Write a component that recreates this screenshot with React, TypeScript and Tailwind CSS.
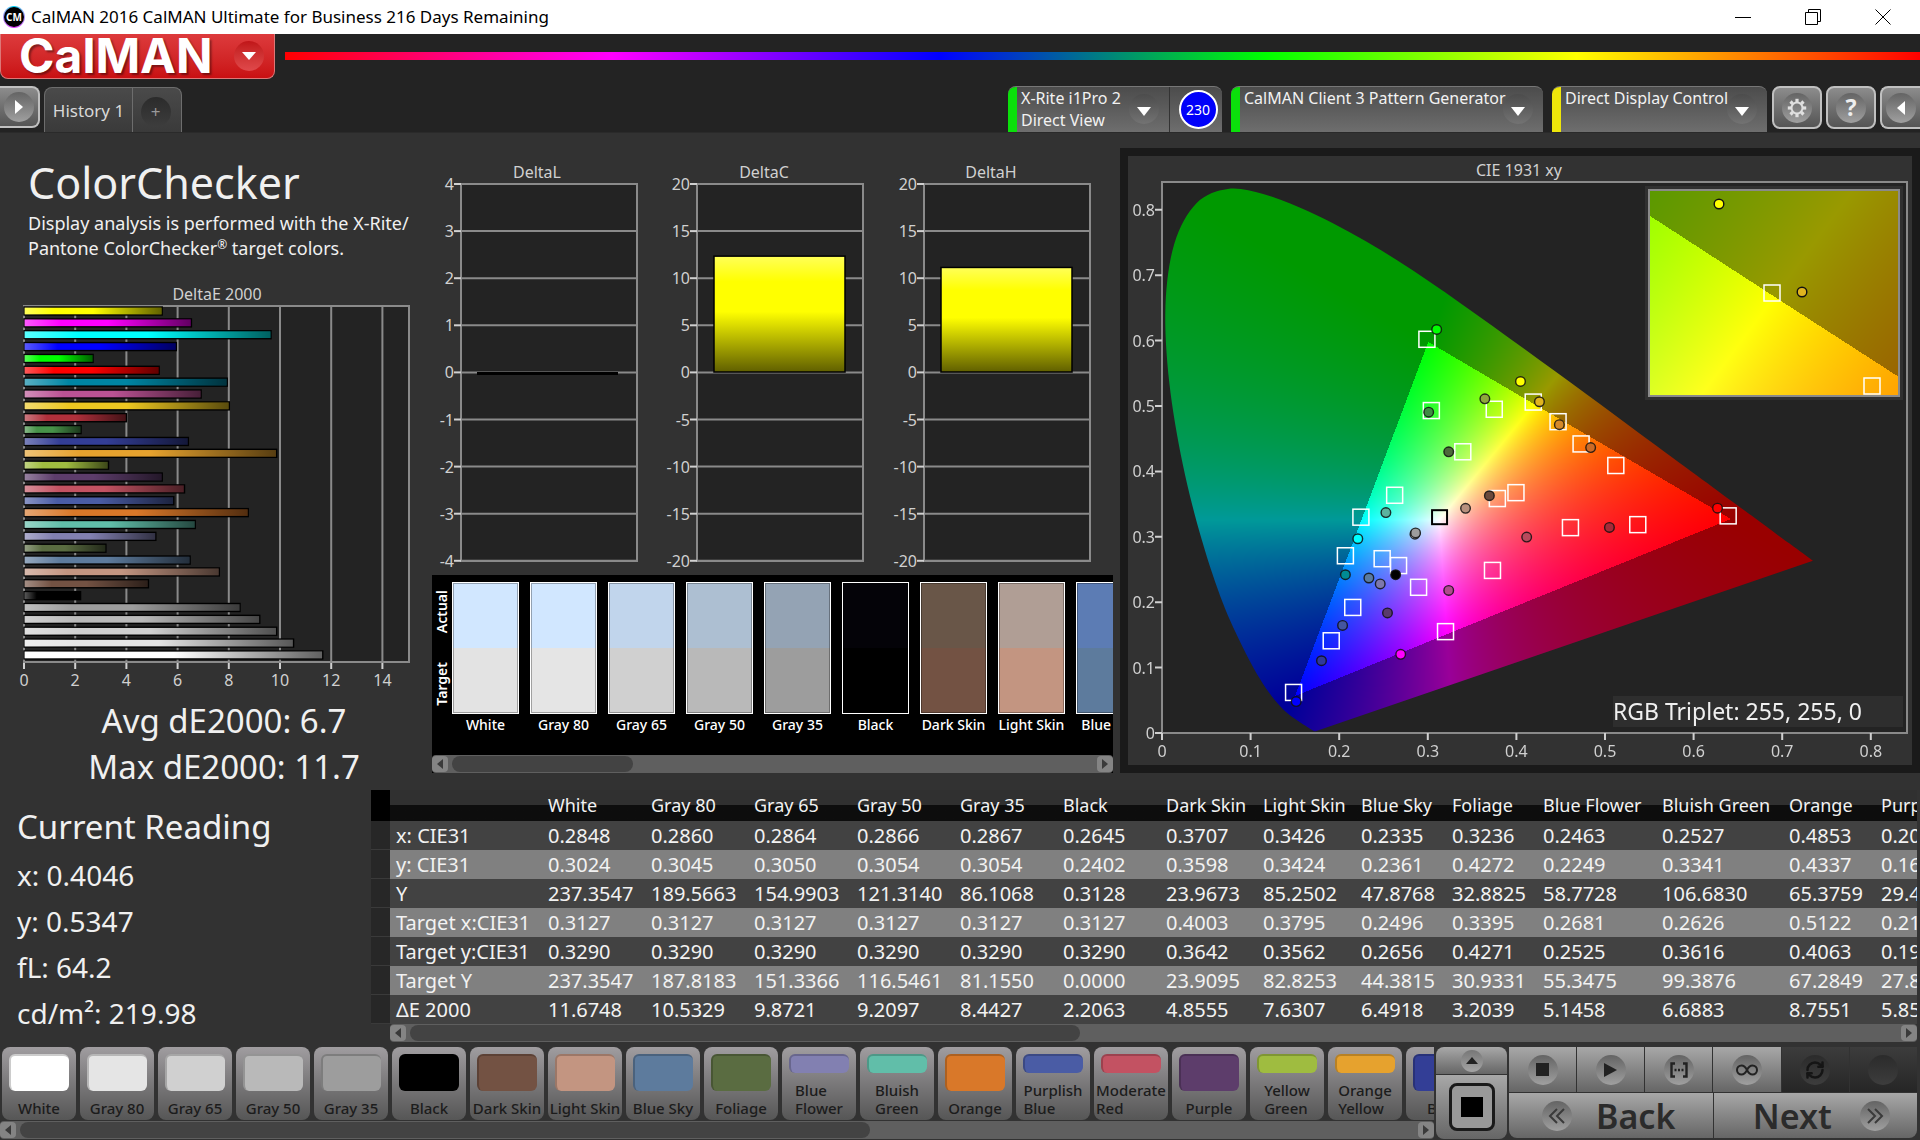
import { useEffect, useRef } from "react";
import type { ReactNode } from "react";
import { RefreshCw } from "lucide-react";

interface Patch {
  name: string;
  color: string;
  dE: number;
  actual?: string;
  lines?: string[];
}

const PATCHES: Patch[] = [
  { name: "White", color: "#ffffff", dE: 11.67, actual: "#d1e7ff" },
  { name: "Gray 80", color: "#e5e5e5", dE: 10.53, actual: "#d1e7ff" },
  { name: "Gray 65", color: "#d0d0d0", dE: 9.87, actual: "#c1d5ec" },
  { name: "Gray 50", color: "#b9b9b9", dE: 9.21, actual: "#adbfd2" },
  { name: "Gray 35", color: "#9d9d9d", dE: 8.44, actual: "#94a3b4" },
  { name: "Black", color: "#000000", dE: 2.21, actual: "#040308" },
  { name: "Dark Skin", color: "#735243", dE: 4.86, actual: "#695648" },
  { name: "Light Skin", color: "#c39581", dE: 7.63, actual: "#b09e95" },
  { name: "Blue Sky", color: "#5d7b9d", dE: 6.49, actual: "#5c7cb4" },
  { name: "Foliage", color: "#5a6c41", dE: 3.2 },
  { name: "Blue Flower", color: "#8280b1", dE: 5.15, lines: ["Blue", "Flower"] },
  { name: "Bluish Green", color: "#61bea9", dE: 6.69, lines: ["Bluish", "Green"] },
  { name: "Orange", color: "#d97829", dE: 8.76 },
  { name: "Purplish Blue", color: "#4a5ca5", dE: 5.85, lines: ["Purplish", "Blue"] },
  { name: "Moderate Red", color: "#c35262", dE: 6.27, lines: ["Moderate", "Red"] },
  { name: "Purple", color: "#5d3d6b", dE: 5.4 },
  { name: "Yellow Green", color: "#9fbc40", dE: 3.3, lines: ["Yellow", "Green"] },
  { name: "Orange Yellow", color: "#e6a22e", dE: 9.87, lines: ["Orange", "Yellow"] },
  { name: "Blue", color: "#333e96", dE: 6.42 },
  { name: "Green", color: "#479349", dE: 2.23 },
  { name: "Red", color: "#b0303b", dE: 4 },
  { name: "Yellow", color: "#edc721", dE: 8.02 },
  { name: "Magenta", color: "#bb5294", dE: 6.92 },
  { name: "Cyan", color: "#0085a3", dE: 7.94 },
  { name: "100% Red", color: "#ff0000", dE: 5.28 },
  { name: "100% Green", color: "#00ff00", dE: 2.7 },
  { name: "100% Blue", color: "#0000ff", dE: 5.95 },
  { name: "100% Cyan", color: "#00ffff", dE: 9.65 },
  { name: "100% Magenta", color: "#ff00ff", dE: 6.54 },
  { name: "100% Yellow", color: "#ffff00", dE: 5.4 },
];

const COLUMNS = [
  { name: "White", width: "w-[103px]" },
  { name: "Gray 80", width: "w-[103px]" },
  { name: "Gray 65", width: "w-[103px]" },
  { name: "Gray 50", width: "w-[103px]" },
  { name: "Gray 35", width: "w-[103px]" },
  { name: "Black", width: "w-[103px]" },
  { name: "Dark Skin", width: "w-[97px]" },
  { name: "Light Skin", width: "w-[98px]" },
  { name: "Blue Sky", width: "w-[91px]" },
  { name: "Foliage", width: "w-[91px]" },
  { name: "Blue Flower", width: "w-[119px]" },
  { name: "Bluish Green", width: "w-[127px]" },
  { name: "Orange", width: "w-[92px]" },
  { name: "Purplish Blue", width: "w-[130px]" },
];

const ROWS = [
  { label: "x: CIE31", values: "0.2848 0.2860 0.2864 0.2866 0.2867 0.2645 0.3707 0.3426 0.2335 0.3236 0.2463 0.2527 0.4853 0.2038" },
  { label: "y: CIE31", values: "0.3024 0.3045 0.3050 0.3054 0.3054 0.2402 0.3598 0.3424 0.2361 0.4272 0.2249 0.3341 0.4337 0.1645" },
  { label: "Y", values: "237.3547 189.5663 154.9903 121.3140 86.1068 0.3128 23.9673 85.2502 47.8768 32.8825 58.7728 106.6830 65.3759 29.4120" },
  { label: "Target x:CIE31", values: "0.3127 0.3127 0.3127 0.3127 0.3127 0.3127 0.4003 0.3795 0.2496 0.3395 0.2681 0.2626 0.5122 0.2153" },
  { label: "Target y:CIE31", values: "0.3290 0.3290 0.3290 0.3290 0.3290 0.3290 0.3642 0.3562 0.2656 0.4271 0.2525 0.3616 0.4063 0.1920" },
  { label: "Target Y", values: "237.3547 187.8183 151.3366 116.5461 81.1550 0.0000 23.9095 82.8253 44.3815 30.9331 55.3475 99.3876 67.2849 27.8410" },
  { label: "ΔE 2000", values: "11.6748 10.5329 9.8721 9.2097 8.4427 2.2063 4.8555 7.6307 6.4918 3.2039 5.1458 6.6883 8.7551 5.8530" },
];

// CIE 1931 2 degree spectral locus, 400nm to 700nm
const LOCUS = [
  [0.1733, 0.0048], [0.1726, 0.0048], [0.1714, 0.0051], [0.1689, 0.0069], [0.1644, 0.0109],
  [0.1566, 0.0177], [0.144, 0.0297], [0.1355, 0.0399], [0.1241, 0.0578], [0.1096, 0.0868],
  [0.0913, 0.1327], [0.0687, 0.2007], [0.0454, 0.295], [0.0235, 0.4127], [0.0082, 0.5384],
  [0.0039, 0.6548], [0.0139, 0.7502], [0.0389, 0.812], [0.0743, 0.8338], [0.1142, 0.8262],
  [0.1547, 0.8059], [0.1929, 0.7816], [0.2296, 0.7543], [0.2658, 0.7243], [0.3016, 0.6923],
  [0.3373, 0.6589], [0.3731, 0.6245], [0.4087, 0.5896], [0.4441, 0.5547], [0.4788, 0.5202],
  [0.5125, 0.4866], [0.5448, 0.4544], [0.5752, 0.4242], [0.6029, 0.3965], [0.627, 0.3725],
  [0.6482, 0.3514], [0.6658, 0.334], [0.6915, 0.3083], [0.7079, 0.292], [0.719, 0.2809],
  [0.7347, 0.2653],
];

const TARGETS = [
  [0.299, 0.602], [0.304, 0.493], [0.375, 0.495], [0.419, 0.506], [0.447, 0.476],
  [0.473, 0.442], [0.5122, 0.409], [0.3395, 0.43], [0.2626, 0.3635], [0.2245, 0.33],
  [0.3785, 0.3585], [0.3995, 0.3675], [0.461, 0.314], [0.537, 0.3186], [0.639, 0.332],
  [0.207, 0.271], [0.2485, 0.2665], [0.267, 0.256], [0.2896, 0.2228], [0.373, 0.2486],
  [0.2153, 0.192], [0.191, 0.141], [0.32, 0.155], [0.1485, 0.062],
];

const MEASURED: [number, number, string][] = [
  [0.31, 0.617, "#00ff00"], [0.4046, 0.5375, "#ffff00"], [0.3644, 0.511, "#8ea83c"],
  [0.426, 0.5065, "#e0b41f"], [0.4485, 0.4715, "#d5892a"], [0.4838, 0.4365, "#cc6a26"],
  [0.3236, 0.43, "#4c6a3a"], [0.301, 0.4905, "#3f8c43"], [0.3695, 0.3628, "#6b4a3c"],
  [0.3426, 0.3435, "#b8917e"], [0.2527, 0.337, "#5bb39f"], [0.2855, 0.304, "#dddddd"],
  [0.2862, 0.306, "#9d9d9d"], [0.221, 0.297, "#00ffff"], [0.207, 0.242, "#008a94"],
  [0.2335, 0.237, "#5a7ba0"], [0.2463, 0.228, "#7d78ad"], [0.2637, 0.242, "#000000"],
  [0.4116, 0.2996, "#b84a5c"], [0.505, 0.3143, "#a62a38"], [0.627, 0.3438, "#ff0000"],
  [0.3236, 0.218, "#b04a8e"], [0.2545, 0.1836, "#5a3a6c"], [0.2038, 0.1645, "#44559f"],
  [0.18, 0.1105, "#30389a"], [0.2694, 0.1203, "#ff00ff"], [0.1514, 0.048, "#0000ff"],
];

// Brightest RGB mix for a chromaticity, dimmed outside the gamut
function chromaToRgb(x: number, y: number) {
  const X = x / y;
  const Z = (1 - x - y) / y;
  const lin = [
    3.2406 * X - 1.5372 - 0.4986 * Z,
    -0.9689 * X + 1.8758 + 0.0415 * Z,
    0.0557 * X - 0.204 + 1.057 * Z,
  ];
  const max = Math.max(...lin);
  const inside = Math.min(...lin) >= -0.001 * max;
  return lin.map((v) => (Math.max(0, v) / max) * (inside ? 255 : 153));
}

interface GamutProps {
  width: number;
  height: number;
  x0: number;
  y0: number;
  kx: number;
  ky: number;
}

function GamutCanvas({ width, height, x0, y0, kx, ky }: GamutProps) {
  const ref = useRef<HTMLCanvasElement>(null);

  useEffect(() => {
    const ctx = ref.current?.getContext("2d");
    if (!ctx) return;
    const img = ctx.createImageData(width, height);
    for (let j = 0; j < height; j++) {
      for (let i = 0; i < width; i++) {
        const [r, g, b] = chromaToRgb(x0 + i / kx, Math.max(0.001, y0 - j / ky));
        const p = (j * width + i) * 4;
        img.data[p] = r;
        img.data[p + 1] = g;
        img.data[p + 2] = b;
        img.data[p + 3] = 255;
      }
    }
    ctx.putImageData(img, 0, 0);

    // Keep only the horseshoe, smoothed through the locus points
    const pts = LOCUS.map(([x, y]) => [(x - x0) * kx, (y0 - y) * ky]);
    ctx.globalCompositeOperation = "destination-in";
    ctx.beginPath();
    ctx.moveTo(pts[0][0], pts[0][1]);
    for (let i = 0; i < pts.length - 1; i++) {
      const a = pts[Math.max(0, i - 1)];
      const b = pts[i];
      const c = pts[i + 1];
      const d = pts[Math.min(pts.length - 1, i + 2)];
      ctx.bezierCurveTo(
        b[0] + (c[0] - a[0]) / 6,
        b[1] + (c[1] - a[1]) / 6,
        c[0] - (d[0] - b[0]) / 6,
        c[1] - (d[1] - b[1]) / 6,
        c[0],
        c[1],
      );
    }
    ctx.closePath();
    ctx.fill();
    ctx.globalCompositeOperation = "source-over";
  }, [width, height, x0, y0, kx, ky]);

  return <canvas ref={ref} width={width} height={height} className="block" />;
}

function CieChart() {
  const px = (x: number) => 34 + x * 886;
  const py = (y: number) => 577 - y * 654;

  return (
    <svg viewBox="0 0 784 609" className="block w-full text-[16px]" fill="#d0d0d0">
      <text x="391" y="20" textAnchor="middle">CIE 1931 xy</text>
      <rect x="34" y="26" width="745" height="551" fill="#232323" />
      <foreignObject x="34" y="26" width="745" height="551">
        <GamutCanvas width={745} height={551} x0={0} y0={0.8445} kx={886} ky={654} />
      </foreignObject>
      <rect x="34" y="26" width="745" height="551" fill="none" stroke="#8a8a8a" strokeWidth="2" />
      {[0, 1, 2, 3, 4, 5, 6, 7, 8].map((n) => (
        <g key={n}>
          <path d={`M${px(n / 10)} 577v7M34 ${py(n / 10)}h-7`} stroke="#d0d0d0" strokeWidth="2" />
          <text x={px(n / 10)} y="601" textAnchor="middle">{n / 10}</text>
          <text x="27" y={py(n / 10) + 6} textAnchor="end">{n / 10}</text>
        </g>
      ))}
      {TARGETS.map(([x, y], i) => (
        <rect key={i} x={px(x) - 8} y={py(y) - 8} width="16" height="16" fill="none" stroke="#fff" strokeWidth="1.5" />
      ))}
      <rect x={px(0.3127) - 7} y={py(0.33) - 7} width="15" height="14" fill="none" stroke="#000" strokeWidth="2" />
      {MEASURED.map(([x, y, color], i) => (
        <circle key={i} cx={px(x)} cy={py(y)} r="4.8" fill={color} stroke="#111" strokeWidth="1.4" strokeOpacity="0.85" />
      ))}

      {/* Zoomed view around the current reading */}
      <rect x="517" y="30" width="258" height="214" fill="#303030" />
      <foreignObject x="521" y="34" width="250" height="206">
        <GamutCanvas width={250} height={206} x0={0.3857} y0={0.5408} kx={3690} ky={3010} />
      </foreignObject>
      <rect x="521" y="34" width="250" height="206" fill="none" stroke="#8a8a8a" strokeWidth="2" />
      <rect x="636" y="129" width="16" height="16" fill="none" stroke="#fff" strokeWidth="1.5" />
      <rect x="736" y="222" width="16" height="16" fill="none" stroke="#fff" strokeWidth="1.5" />
      <circle cx="591" cy="48" r="4.8" fill="#ffff00" stroke="#111" strokeWidth="1.4" />
      <circle cx="674" cy="136" r="4.8" fill="#e0b41f" stroke="#111" strokeWidth="1.4" />

      <rect x="485" y="540" width="290" height="31" fill="#2e2e2e" />
      <text x="485" y="564" fontSize="23" fill="#f0f0f0">RGB Triplet: 255, 255, 0</text>
    </svg>
  );
}

function DeltaEChart() {
  return (
    <svg viewBox="0 0 410 410" className="block w-full text-[16px]" fill="#d0d0d0">
      <defs>
        <linearGradient id="shadeRight">
          <stop offset="0" stopColor="#fff" stopOpacity="0.35" />
          <stop offset="0.22" stopColor="#fff" stopOpacity="0" />
          <stop offset="0.5" stopColor="#000" stopOpacity="0" />
          <stop offset="1" stopColor="#000" stopOpacity="0.62" />
        </linearGradient>
      </defs>
      <text x="217" y="17" textAnchor="middle">DeltaE 2000</text>
      <rect x="24" y="23" width="385" height="356" fill="#232323" stroke="#8a8a8a" strokeWidth="2" />
      {[0, 2, 4, 6, 8, 10, 12, 14].map((n) => (
        <g key={n}>
          <path d={`M${24 + n * 25.6} 23v356`} stroke="#8a8a8a" strokeWidth="2" />
          <path d={`M${24 + n * 25.6} 380v6`} stroke="#d0d0d0" strokeWidth="2" />
          <text x={24 + n * 25.6} y="403" textAnchor="middle">{n}</text>
        </g>
      ))}
      {[...PATCHES].reverse().map((p, i) => (
        <g key={p.name}>
          <rect x="24" y={24 + i * 11.86} width={p.dE * 25.6} height="8" fill={p.color} stroke="#000" strokeWidth="1.4" />
          <rect x="24.5" y={24.5 + i * 11.86} width={p.dE * 25.6 - 1} height="7" fill="url(#shadeRight)" />
        </g>
      ))}
    </svg>
  );
}

interface DeltaBarProps {
  title: string;
  step: number;
  width: number;
  value: number;
}

function DeltaBarChart({ title, step, width, value }: DeltaBarProps) {
  const right = 41 + width;
  const barHeight = (value / step) * 47.1;
  return (
    <div className="shrink-0">
      <svg viewBox={`0 0 ${right + 1} 412`} width={right + 1} height={412} className="block text-[16px]" fill="#d0d0d0">
        <defs>
          <linearGradient id="shadeDown" x2="0" y2="1">
            <stop offset="0" stopColor="#ffff58" />
            <stop offset="0.22" stopColor="#ffff00" />
            <stop offset="0.48" stopColor="#ffff00" />
            <stop offset="1" stopColor="#605f00" />
          </linearGradient>
        </defs>
        <text x={117 - (176 - width) / 2 - (step > 1 ? 4 : 0)} y="17" textAnchor="middle">{title}</text>
        <rect x="41" y="23" width={width} height="377" fill="#232323" stroke="#8a8a8a" strokeWidth="2" />
        {[4, 3, 2, 1, 0, -1, -2, -3, -4].map((n, i) => (
          <g key={n}>
            <path d={`M41 ${23 + i * 47.1}h${width}`} stroke="#8a8a8a" strokeWidth="2" />
            <path d={`M41 ${23 + i * 47.1}h-7`} stroke="#d0d0d0" strokeWidth="2" />
            <text x="34" y={29 + i * 47.1} textAnchor="end">{n * step}</text>
          </g>
        ))}
        {value > 0 ? (
          <rect x="58" y={211 - barHeight} width={width - 35} height={barHeight} fill="url(#shadeDown)" stroke="#000" strokeWidth="1.5" />
        ) : (
          <rect x="57" y="211" width={width - 35} height="3" fill="#000" />
        )}
      </svg>
    </div>
  );
}

function ScrollBar({ thumb }: { thumb: string }) {
  return (
    <div className="flex h-[18px] items-center gap-1 rounded-sm bg-[#5f5f5f]">
      <button type="button" aria-label="Scroll left" className="flex h-4 w-4 items-center justify-center rounded-sm bg-[#848484]">
        <svg viewBox="0 0 6 10" className="h-[10px] w-[6px]" fill="#3a3a3a"><path d="M6 0v10L0 5z" /></svg>
      </button>
      <div className="flex-1">
        <div className={`h-4 rounded-lg bg-[#434343] ${thumb}`} />
      </div>
      <button type="button" aria-label="Scroll right" className="flex h-4 w-4 items-center justify-center rounded-sm bg-[#848484]">
        <svg viewBox="0 0 6 10" className="h-[10px] w-[6px]" fill="#3a3a3a"><path d="M0 0v10l6-5z" /></svg>
      </button>
    </div>
  );
}

function Round({ children, dark }: { children?: ReactNode; dark?: boolean }) {
  return (
    <span
      className={`flex h-[30px] w-[30px] shrink-0 items-center justify-center rounded-full bg-linear-to-b ${
        dark ? "from-[#2b2b2b] to-[#3d3d3d]" : "from-[#646464] to-[#a0a0a0]"
      }`}
    >
      {children}
    </span>
  );
}

function DropArrow() {
  return (
    <span className="flex h-[30px] w-[30px] shrink-0 items-center justify-center rounded-full bg-linear-to-b from-[#4c4c4c] to-[#737373]">
      <svg viewBox="0 0 14 9" className="mt-1 h-[9px] w-[14px]" fill="#fff"><path d="M0 0h14L7 9z" /></svg>
    </span>
  );
}

function Gear() {
  return (
    <svg viewBox="0 0 20 20" className="h-5 w-5" fill="none" stroke="#e0e0e0">
      <circle cx="10" cy="10" r="5.5" strokeWidth="2" />
      {[0, 45, 90, 135, 180, 225, 270, 315].map((a) => (
        <path key={a} d="M10 4V.8" strokeWidth="3.2" transform={`rotate(${a} 10 10)`} />
      ))}
    </svg>
  );
}

interface DeviceTabProps {
  lines: string[];
  stripe: string;
  width: string;
  children?: ReactNode;
}

function DeviceTab({ lines, stripe, width, children }: DeviceTabProps) {
  return (
    <div className={`flex h-[46px] overflow-hidden rounded-t-lg border-t border-[#777] bg-linear-to-b from-[#4c4c4c] to-[#6e6e6e] ${width}`}>
      <div className={`w-[9px] shrink-0 ${stripe}`} />
      <button type="button" className="flex min-w-0 flex-1 items-start justify-between pr-[10px] pl-1 text-left text-[16px] leading-[22px] whitespace-nowrap text-[#f2f2f2]">
        <span>
          {lines.map((line) => <span key={line} className="block">{line}</span>)}
        </span>
        <span className="-ml-4 mt-[7px]"><DropArrow /></span>
      </button>
      {children}
    </div>
  );
}

const toolButton = "flex h-[43px] items-center justify-center rounded-lg border-2 border-[#c0c0c0] bg-linear-to-b from-[#8c8c8c] to-[#555]";

function TitleBar() {
  return (
    <header className="flex h-[34px] items-center bg-white pr-[2px] pl-[3px] text-black">
      <span className="flex h-[22px] w-[22px] items-center justify-center rounded-full bg-conic from-cyan-400 via-fuchsia-500 to-cyan-400">
        <span className="flex h-5 w-5 items-center justify-center rounded-full bg-black text-[10px] font-bold text-white">CM</span>
      </span>
      <h1 className="ml-[6px] text-[17px]">CalMAN 2016 CalMAN Ultimate for Business 216 Days Remaining</h1>
      <div className="ml-auto flex">
        <button type="button" aria-label="Minimize" className="flex w-[70px] justify-center">
          <svg viewBox="0 0 16 16" className="h-4 w-4" stroke="#000" fill="none"><path d="M0 8.5h16" /></svg>
        </button>
        <button type="button" aria-label="Restore" className="flex w-[70px] justify-center">
          <svg viewBox="0 0 16 16" className="h-4 w-4" stroke="#000" fill="none"><path d="M.5 3.5h12v12H.5zM3.5 3.500V.5h12v12h-3" /></svg>
        </button>
        <button type="button" aria-label="Close" className="flex w-[70px] justify-center">
          <svg viewBox="0 0 16 16" className="h-4 w-4" stroke="#000" fill="none"><path d="M.5.5l15 15M15.500.5l-15 15" /></svg>
        </button>
      </div>
    </header>
  );
}

function Toolbar() {
  return (
    <>
      <div className="flex h-[45px] gap-[10px] bg-[#232323]">
        <button type="button" className="flex h-[45px] w-[275px] items-center justify-between rounded-b-lg border border-t-0 border-[#d77] bg-linear-to-b from-[#dd3a3c] to-[#c90f12] pl-[18px] pr-[10px]">
          <span className="font-[Inter,sans-serif] text-[48px] leading-[42px] font-bold text-white [text-shadow:2px_2px_2px_#0006]">CalMAN</span>
          <span className="flex h-[30px] w-[30px] items-center justify-center rounded-full bg-linear-to-b from-[#c01518] to-[#e0494b]">
            <svg viewBox="0 0 14 8" className="h-2 w-[14px]" fill="#fff"><path d="M0 0h14L7 8z" /></svg>
          </span>
        </button>
        <div className="mt-[18px] h-2 flex-1 bg-[linear-gradient(to_right,#f00,#f0f_20%,#00f_40%,#0f0_60%,#ff0_79%,#f00)]" />
      </div>
      <div className="flex items-end bg-[#232323]">
        <button type="button" aria-label="Expand" className="mt-[7px] mb-[4px] flex h-[42px] w-10 items-center justify-center rounded-r-lg border-2 border-l-0 border-[#c0c0c0] bg-linear-to-b from-[#8c8c8c] to-[#555]">
          <Round><svg viewBox="0 0 8 14" className="h-[14px] w-2" fill="#fff"><path d="M0 0v14l8-7z" /></svg></Round>
        </button>
        <nav className="ml-1 flex h-[45px] rounded-t-lg border border-b-0 border-[#6d6d6d] bg-linear-to-b from-[#4a4a4a] to-[#3a3a3a]">
          <button type="button" className="w-[88px] border-r border-[#6d6d6d] pt-[2px] text-[17px] text-[#d8d8d8]">History 1</button>
          <button type="button" aria-label="Add history" className="flex w-[48px] items-center justify-center pt-1 pr-[3px]">
            <Round dark><span className="text-[17px] text-[#999]">+</span></Round>
          </button>
        </nav>
        <div className="ml-auto flex items-end gap-[9px]">
          <DeviceTab lines={["X-Rite i1Pro 2", "Direct View"]} stripe="bg-[#0be00b]" width="w-[214px]">
            <div className="flex w-[53px] items-center justify-center border-l border-[#333] pl-1">
              <span className="flex h-[39px] w-[39px] items-center justify-center rounded-full border-2 border-white bg-[#0000fa] text-[14px] text-white">230</span>
            </div>
          </DeviceTab>
          <DeviceTab lines={["CalMAN Client 3 Pattern Generator"]} stripe="bg-[#0be00b]" width="w-[312px]" />
          <DeviceTab lines={["Direct Display Control"]} stripe="bg-[#eee60a]" width="w-[215px]" />
        </div>
        <div className="mb-[3px] ml-[5px] flex gap-1">
          <button type="button" aria-label="Settings" className={`w-[50px] ${toolButton}`}>
            <Round><Gear /></Round>
          </button>
          <button type="button" aria-label="Help" className={`w-[50px] ${toolButton}`}>
            <Round><span className="text-[23px] leading-none font-bold text-[#eee]">?</span></Round>
          </button>
          <button type="button" aria-label="Collapse" className="flex h-[43px] w-10 items-center justify-center rounded-l-lg border-2 border-r-0 border-[#c0c0c0] bg-linear-to-b from-[#8c8c8c] to-[#555]">
            <Round><svg viewBox="0 0 8 14" className="h-[14px] w-2" fill="#fff"><path d="M8 0v14L0 7z" /></svg></Round>
          </button>
        </div>
      </div>
    </>
  );
}

function SwatchStrip() {
  return (
    <section className="ml-3 w-[681px] bg-black">
      <div className="flex h-[180px] overflow-hidden pt-[7px]">
        <div className="flex h-[132px] w-5 shrink-0 flex-col justify-between py-2 text-[14px] font-semibold text-white">
          <span className="rotate-180 leading-5 [writing-mode:vertical-rl]">Actual</span>
          <span className="rotate-180 leading-5 [writing-mode:vertical-rl]">Target</span>
        </div>
        <div className="flex gap-[11px]">
          {PATCHES.slice(0, 9).map((p) => (
            <figure key={p.name} className="w-[67px] shrink-0">
              <div className="flex h-[132px] flex-col border border-white">
                <div className="flex-1 border border-b-0 border-black/30" style={{ backgroundColor: p.actual }} />
                <div className="flex-1 border border-t-0 border-black/30" style={{ backgroundColor: p.name === "White" ? "#e3e3e3" : p.color }} />
              </div>
              <figcaption className="-mx-1 mt-px text-center text-[14px] leading-5 font-medium whitespace-nowrap text-white">{p.name}</figcaption>
            </figure>
          ))}
        </div>
      </div>
      <ScrollBar thumb="w-[181px]" />
    </section>
  );
}

function ReadingsTable() {
  return (
    <section className="flex min-w-0 flex-1 pr-[3px]">
      <div className="w-[19px] shrink-0">
        <div className="h-[31px] bg-black" />
        {ROWS.map((row) => <div key={row.label} className="h-[29px] border-b border-[#3a3a3a] bg-[#272727]" />)}
      </div>
      <div className="min-w-0 flex-1">
        <div className="overflow-hidden">
          <table className="w-[1610px] table-fixed border-collapse text-left whitespace-nowrap text-[#f2f2f2]">
            <thead className="bg-linear-to-b from-[#303030] from-50% to-[#0d0d0d] to-50%">
              <tr className="h-[31px]">
                <th className="w-[152px]" />
                {COLUMNS.map((c) => (
                  <th key={c.name} scope="col" className={`pl-[6px] text-[18px] leading-[31px] font-normal ${c.width}`}>{c.name}</th>
                ))}
              </tr>
            </thead>
            <tbody className="text-[20px] leading-[29px]">
              {ROWS.map((row) => (
                <tr key={row.label} className="h-[29px] odd:bg-[#424242] even:bg-[#808080]">
                  <th scope="row" className="pl-[6px] font-normal">{row.label}</th>
                  {row.values.split(" ").map((v, i) => <td key={i} className="pl-[6px]">{v}</td>)}
                </tr>
              ))}
            </tbody>
          </table>
        </div>
        <ScrollBar thumb="w-[670px]" />
      </div>
    </section>
  );
}

function PatchBar() {
  return (
    <div className="min-w-0 flex-1">
      <div className="flex gap-1 overflow-hidden pl-[2px]">
        {PATCHES.slice(0, 19).map((p) => (
          <button key={p.name} type="button" className="flex h-[73px] w-[74px] shrink-0 flex-col items-center rounded-lg bg-linear-to-b from-[#a09da0] to-[#565656] pt-[7px] pb-[3px] text-[#1c1c1c]">
            <span
              className={`w-[60px] rounded-md border-t-2 border-l-2 border-black/20 ${p.lines ? "h-[19px]" : "h-[37px]"}`}
              style={{ backgroundColor: p.color }}
            />
            <span className="mt-auto text-left text-[15px] leading-[18px] font-medium whitespace-nowrap">
              {(p.lines ?? [p.name]).map((line) => <span key={line} className="block">{line}</span>)}
            </span>
          </button>
        ))}
      </div>
      <div className="mt-[1px]"><ScrollBar thumb="w-[850px]" /></div>
    </div>
  );
}

const cell = "flex items-center justify-center bg-linear-to-b from-[#a8a8a8] to-[#666]";
const darkCell = "flex items-center justify-center bg-linear-to-b from-[#3c3c3c] to-[#262626]";

function Chevrons({ d }: { d: string }) {
  return <svg viewBox="0 0 18 16" className="h-4 w-[18px]" fill="none" stroke="#3a3a3a" strokeWidth="2"><path d={d} /></svg>;
}

function Transport() {
  return (
    <div className="flex gap-[2px] pr-[3px] pl-[2px]">
      <div className="flex w-[71px] flex-col gap-px">
        <button type="button" aria-label="Open pattern list" className={`h-[27px] rounded-t-lg ${cell}`}>
          <span className="flex h-[22px] w-[22px] items-center justify-center rounded-full bg-linear-to-b from-[#777] to-[#a5a5a5]">
            <svg viewBox="0 0 12 7" className="h-[7px] w-3" fill="#222"><path d="M6 0l6 7H0z" /></svg>
          </span>
        </button>
        <button type="button" aria-label="Pattern window" className={`h-[64px] rounded-b-lg ${cell}`}>
          <span className="flex h-[48px] w-[46px] items-center justify-center rounded-lg border-[3px] border-[#1a1a1a] bg-[#999]">
            <span className="h-5 w-[22px] bg-black" />
          </span>
        </button>
      </div>
      <div className="flex w-[408px] flex-col gap-px">
        <div className="grid h-[45px] grid-cols-6 gap-px">
          <button type="button" aria-label="Stop" className={cell}><Round><span className="h-[13px] w-[13px] bg-[#222]" /></Round></button>
          <button type="button" aria-label="Play" className={cell}>
            <Round><svg viewBox="0 0 13 14" className="h-[14px] w-[13px]" fill="#222"><path d="M0 0v14l13-7z" /></svg></Round>
          </button>
          <button type="button" aria-label="Read series" className={cell}>
            <Round>
              <svg viewBox="0 0 20 16" className="h-4 w-5" fill="none" stroke="#222" strokeWidth="2.4"><path d="M6 1.500H2.500v13H6M14 1.500h3.500v13H14M5.500 8h2M9 8h2M12.500 8h2" /></svg>
            </Round>
          </button>
          <button type="button" aria-label="Read continuously" className={cell}>
            <Round>
              <svg viewBox="0 0 22 12" className="h-3 w-[22px]" fill="none" stroke="#222" strokeWidth="2"><path d="M11 6C9 2 7 1.500 5.500 1.500a4.500 4.500 0 0 0 0 9C7 10.500 9 10 11 6s4-4.500 5.500-4.500a4.500 4.500 0 0 1 0 9C15 10.500 13 10 11 6z" /></svg>
            </Round>
          </button>
          <button type="button" aria-label="Repeat" className={darkCell}><Round dark><RefreshCw className="h-5 w-5 text-[#151515]" strokeWidth={3} /></Round></button>
          <button type="button" aria-label="Record" className={darkCell}><Round dark /></button>
        </div>
        <div className="grid h-[45px] grid-cols-2 gap-px text-[34px] leading-none font-semibold text-[#2b2b2b]">
          <button type="button" className={`gap-6 rounded-bl-lg pr-1 ${cell}`}>
            <Round><Chevrons d="M9 1L2 8l7 7M16 1L9 8l7 7" /></Round>
            Back
          </button>
          <button type="button" className={`gap-7 rounded-br-lg pl-3 ${cell}`}>
            Next
            <Round><Chevrons d="M2 1l7 7-7 7M9 1l7 7-7 7" /></Round>
          </button>
        </div>
      </div>
    </div>
  );
}

export default function App() {
  return (
    <div className="flex min-h-screen flex-col overflow-hidden bg-[#323232] font-['Noto_Sans',sans-serif] text-[#f0f0f0]">
      <TitleBar />
      <Toolbar />
      <main className="flex flex-col border-t border-[#2a2a2a]">
        <div className="flex">
          <section className="w-[420px] shrink-0">
            <h2 className="mt-[22px] ml-7 text-[43px] leading-[56px]">ColorChecker</h2>
            <p className="ml-7 text-[18px] leading-[25px] whitespace-nowrap">
              Display analysis is performed with the X-Rite/
              <br />
              Pantone ColorChecker<sup className="text-[12px] leading-none">®</sup> target colors.
            </p>
            <div className="mt-[22px] w-[410px]"><DeltaEChart /></div>
            <div className="mt-[5px] w-[448px] text-center text-[33px] leading-[46px]">
              <p>Avg dE2000: 6.7</p>
              <p>Max dE2000: 11.7</p>
            </div>
          </section>
          <div className="w-[700px] shrink-0">
            <div className="mt-[28px] flex h-[414px]">
              <DeltaBarChart title="DeltaL" step={1} width={176} value={0} />
              <div className="ml-[18px]"><DeltaBarChart title="DeltaC" step={5} width={166} value={12.3} /></div>
              <div className="ml-[19px]"><DeltaBarChart title="DeltaH" step={5} width={166} value={11.1} /></div>
            </div>
            <SwatchStrip />
          </div>
          <section className="mt-[15px] min-w-0 flex-1 self-start border-8 border-[#1a1a1a] bg-[#323232]">
            <CieChart />
          </section>
        </div>
        <div className="flex">
          <section className="w-[371px] shrink-0 pl-[17px] text-[28px] leading-[46px]">
            <h2 className="mt-[14px] mb-[2px] text-[33px]">Current Reading</h2>
            <p>x: 0.4046</p>
            <p>y: 0.5347</p>
            <p>fL: 64.2</p>
            <p>cd/m²: 219.98</p>
          </section>
          <ReadingsTable />
        </div>
      </main>
      <footer className="mt-auto flex pb-px">
        <PatchBar />
        <Transport />
      </footer>
    </div>
  );
}
